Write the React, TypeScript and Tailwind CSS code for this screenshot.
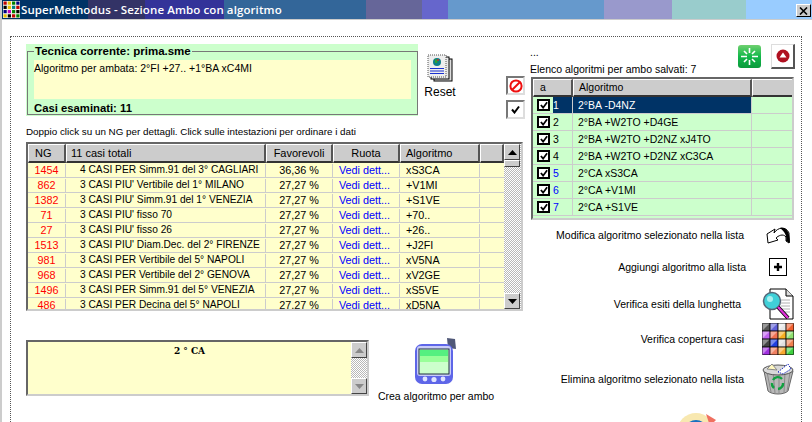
import React from "react";

const segments = [
  "w-[88px] bg-[#003366]",
  "w-[57px] bg-[#333366]",
  "w-[79px] bg-[#333399]",
  "w-[142px] bg-[#336699]",
  "w-[56px] bg-[#666699]",
  "w-[26px] bg-[#6666cc]",
  "w-[156px] bg-[#6699cc]",
  "w-[68px] bg-[#9999cc]",
  "w-[74px] bg-[#99cccc]",
  "flex-1 bg-[#99ccff]",
];

const rows = [
  ["1454", "4 CASI PER Simm.91 del 3° CAGLIARI", "36,36 %", "xS3CA"],
  ["862", "3 CASI PIU' Vertibile del 1° MILANO", "27,27 %", "+V1MI"],
  ["1382", "3 CASI PIU' Simm.91 del 1° VENEZIA", "27,27 %", "+S1VE"],
  ["71", "3 CASI PIU' fisso 70", "27,27 %", "+70.."],
  ["27", "3 CASI PIU' fisso 26", "27,27 %", "+26.."],
  ["1513", "3 CASI PIU' Diam.Dec. del 2° FIRENZE", "27,27 %", "+J2FI"],
  ["981", "3 CASI PER Vertibile del 5° NAPOLI", "27,27 %", "xV5NA"],
  ["968", "3 CASI PER Vertibile del 2° GENOVA", "27,27 %", "xV2GE"],
  ["1496", "3 CASI PER Simm.91 del 5° VENEZIA", "27,27 %", "xS5VE"],
  ["486", "3 CASI PER Decina del 5° NAPOLI", "27,27 %", "xD5NA"],
];

const algos = [
  "2°BA -D4NZ",
  "2°BA +W2TO +D4GE",
  "2°BA +W2TO +D2NZ xJ4TO",
  "2°BA +W2TO +D2NZ xC3CA",
  "2°CA xS3CA",
  "2°CA +V1MI",
  "2°CA +S1VE",
];

const headCell =
  "flex items-center bg-[#cccccc] border-t border-l border-t-white border-l-white border-r-2 border-b-2 border-r-[#555555] border-b-[#333333]";

function ArrowButton({ up, faint }: { up: boolean; faint?: boolean }) {
  return (
    <div className="flex h-[16px] w-[16px] shrink-0 items-center justify-center border border-t-white border-l-white border-r-[#444444] border-b-[#444444] bg-[#cccccc]">
      <svg width="9" height="5" viewBox="0 0 9 5">
        <path d={up ? "M4.5 0 L9 5 L0 5 Z" : "M0 0 L9 0 L4.5 5 Z"} fill={faint ? "#888888" : "#000000"} />
      </svg>
    </div>
  );
}

function Scrollbar({ faint, thumb, className }: { faint?: boolean; thumb?: boolean; className: string }) {
  return (
    <div className={`flex flex-col bg-[repeating-conic-gradient(#b8b8b8_0%_25%,#ffffff_0%_50%)] bg-size-[2px_2px] ${className}`}>
      <ArrowButton up faint={faint} />
      {thumb && <div className="h-[7px] w-[16px] border border-t-white border-l-white border-r-[#444444] border-b-[#444444] bg-[#cccccc]" />}
      <div className="flex-1" />
      <ArrowButton up={false} faint={faint} />
    </div>
  );
}

function AppIcon() {
  const c = ["#c00000", "#e8c000", "#008000", "#000080", "#000000", "#e8c000", "#008080", "#c00000", "#000080", "#c000c0", "#008000", "#000000", "#e8c000", "#000000", "#c00000", "#008000"];
  return (
    <svg width="17" height="17" viewBox="0 0 16 16" className="shrink-0">
      <rect width="16" height="16" fill="#f4f4e8" />
      {c.map((f, i) => (
        <rect key={i} x={(i % 4) * 4 + 0.5} y={Math.floor(i / 4) * 4 + 0.5} width="3" height="3" fill={f} />
      ))}
    </svg>
  );
}

function ResetIcon() {
  return (
    <svg width="26" height="28" viewBox="0 0 26 28">
      <rect x="7" y="5" width="18" height="22" fill="#dddddd" stroke="#000000" />
      <rect x="4" y="3" width="18" height="22" fill="#e8e8e8" stroke="#000000" />
      <rect x="1" y="1" width="18" height="22" fill="#eeeeee" stroke="#555555" strokeDasharray="1 1" />
      <circle cx="10" cy="8" r="4" fill="#0f7f88" />
      <path d="M8 5 L11 6 L10 9 L8 9 Z" fill="#32a032" />
      <circle cx="11" cy="6" r="1" fill="#c03030" />
      <path d="M3 14.5 H17 M3 17 H17 M3 19.5 H17" stroke="#1a30d0" strokeWidth="1" />
    </svg>
  );
}

function BevelButton({ children, className }: { children: React.ReactNode; className: string }) {
  return <div className={`flex items-center justify-center bg-white ${className}`}>{children}</div>;
}

function SyncIcon() {
  return (
    <svg width="23" height="23" viewBox="0 0 23 23">
      <defs>
        <linearGradient id="gr" x1="0" y1="0" x2="0" y2="1">
          <stop offset="0" stopColor="#6fd06f" />
          <stop offset="0.5" stopColor="#12b84a" />
          <stop offset="1" stopColor="#0a9a3c" />
        </linearGradient>
      </defs>
      <rect width="23" height="23" rx="3" fill="url(#gr)" />
      <path d="M3 11.5 H9 M14 11.5 H20 M11.5 3 V8 M11.5 15 V20 M6 6 L9 9 M17 6 L14 9 M6 17 L9 14 M17 17 L14 14" stroke="#ffffff" strokeWidth="1.6" />
    </svg>
  );
}

function UpIcon() {
  return (
    <svg width="14" height="14" viewBox="0 0 14 14">
      <circle cx="7" cy="7" r="6.5" fill="#b01020" />
      <path d="M7 3.5 L10.5 8.5 H3.5 Z" fill="#ffffff" />
    </svg>
  );
}

function StopIcon() {
  return (
    <svg width="14" height="14" viewBox="0 0 14 14">
      <circle cx="7" cy="7" r="5.6" fill="none" stroke="#ee1111" strokeWidth="2" />
      <path d="M3 11 L11 3" stroke="#ee1111" strokeWidth="2" />
    </svg>
  );
}

function CheckMark({ w = 9 }: { w?: number }) {
  return (
    <svg width={w} height={w} viewBox="0 0 9 9">
      <path d="M1 4.5 L3.5 7.5 L8 1.5" fill="none" stroke="#000000" strokeWidth="2" />
    </svg>
  );
}

function ModifyIcon() {
  return (
    <svg width="25" height="19" viewBox="0 0 25 19">
      <path d="M1 8 L9 3 L8 7 C12 1 20 0 23 7 L23 17 L20 15 L20 11 C17 7 12 10 10 12 L12 14 L2 17 Z" fill="#ffffff" stroke="#000000" strokeWidth="1" />
      <path d="M14 2 C19 1 24 4 24 17 L20 15 C21 10 19 6 14 2 Z" fill="#000000" />
    </svg>
  );
}

function PlusIcon() {
  return (
    <div className="flex h-[18px] w-[18px] items-center justify-center border border-black bg-white">
      <svg width="10" height="10" viewBox="0 0 10 10">
        <path d="M5 1 V9 M1 5 H9" stroke="#000000" strokeWidth="2.4" />
      </svg>
    </div>
  );
}

function MagnifierIcon() {
  return (
    <svg width="32" height="33" viewBox="0 0 32 33">
      <path d="M8 1 H24 L31 8 V31 H8 Z" fill="#ffffff" stroke="#000000" />
      <path d="M24 1 V8 H31" fill="#dddddd" stroke="#000000" />
      <path d="M19 12 H28 M19 15 H28 M19 18 H28 M20 21 H28 M22 24 H28" stroke="#b0b0b0" />
      <circle cx="10" cy="13" r="8.5" fill="#40d0d8" stroke="#556677" strokeWidth="1.5" />
      <circle cx="8" cy="11" r="3" fill="#a8f0f0" />
      <path d="M16 19 L26 30" stroke="#000000" strokeWidth="4" />
      <path d="M16 19 L26 30" stroke="#e030d8" strokeWidth="2.4" />
    </svg>
  );
}

function SwatchIcon() {
  const colors = ["#555555", "#6060d8", "#e8e8e8", "#f06030", "#c060f0", "#f07050", "#f8b020", "#90e070", "#444444", "#2040e0", "#e0e0e0", "#f08050", "#a030e0", "#f08060", "#f8a830", "#40d040"];
  return (
    <svg width="32" height="32" viewBox="0 0 32 32">
      <rect width="32" height="32" rx="1" fill="#000000" />
      {colors.map((f, i) => (
        <g key={i}>
          <rect x={(i % 4) * 8 + 0.5} y={Math.floor(i / 4) * 8 + 0.5} width="7" height="7" fill={f} />
          <path d={`M${(i % 4) * 8 + 0.5} ${Math.floor(i / 4) * 8 + 0.5} h7 l-7 7 z`} fill="#ffffff" opacity="0.4" />
        </g>
      ))}
    </svg>
  );
}

function RecycleIcon() {
  return (
    <svg width="32" height="33" viewBox="0 0 32 33">
      <path d="M2 8 L6 28 C10 32 22 32 26 28 L31 8 Z" fill="#b8b8b8" stroke="#666666" />
      <path d="M5 9 L9 29 M11 9 L13 30 M17 9 L17 30 M23 9 L22 30 M28 9 L25 29" stroke="#8a8a8a" strokeWidth="1" />
      <ellipse cx="16" cy="7" rx="15" ry="5" fill="#d8d8d8" stroke="#555555" />
      <path d="M5 6 L10 1 L15 7 Z" fill="#fff8c0" stroke="#888888" />
      <path d="M16 9 L26 1 L29 6 L21 11 Z" fill="#ffffff" stroke="#2030c0" strokeDasharray="1.5 1" />
      <path d="M11 17 A5.5 5.5 0 0 1 20 16 M21 20 A5.5 5.5 0 0 1 16 26 M12 25 A5.5 5.5 0 0 1 10 20" fill="none" stroke="#10a040" strokeWidth="2.4" />
    </svg>
  );
}

function PalmIcon() {
  return (
    <svg width="44" height="48" viewBox="0 0 44 48">
      <path d="M33 1 L41 2 L42 12 L34 11 Z" fill="#505878" />
      <rect x="1" y="7" width="38" height="40" rx="7" fill="#5e66e8" />
      <rect x="3" y="9" width="34" height="30" rx="3" fill="#c8ccf8" />
      <rect x="5" y="12" width="30" height="25" fill="#ccffcc" stroke="#203040" />
      <rect x="6" y="13" width="28" height="6" fill="#55f080" />
      <rect x="6" y="19" width="28" height="6" fill="#99ff99" />
      <circle cx="11" cy="42" r="2.4" fill="#e0e4ff" />
      <circle cx="20" cy="42.5" r="2.6" fill="#e0e4ff" />
      <circle cx="29" cy="42" r="2.4" fill="#e0e4ff" />
    </svg>
  );
}

function CutIcon() {
  return (
    <svg width="44" height="44" viewBox="0 0 44 44">
      <circle cx="20" cy="20" r="19" fill="#f8e8b0" />
      <circle cx="20" cy="20" r="12" fill="#1870c0" />
      <circle cx="20" cy="22" r="6" fill="#ffffff" />
      <path d="M30 2 L40 8 L34 14 Z" fill="#f07060" />
    </svg>
  );
}

const actions: [string, string, string, React.ReactNode][] = [
  ["Modifica algoritmo selezionato nella lista", "h-[28px]", "mr-[16px]", <ModifyIcon />],
  ["Aggiungi algoritmo alla lista", "h-[36px]", "mr-[14px]", <PlusIcon />],
  ["Verifica esiti della lunghetta", "h-[38px]", "mr-[19px]", <MagnifierIcon />],
  ["Verifica copertura casi", "h-[32px]", "mr-[16px]", <SwatchIcon />],
  ["Elimina algoritmo selezionato nella lista", "h-[48px]", "mr-[16px]", <RecycleIcon />],
];

export default function App() {
  return (
    <div className="relative h-[422px] w-[812px] overflow-hidden border-l-2 border-l-[#cccccc] bg-white font-['Liberation_Sans',Arial,sans-serif] text-[10.5px] leading-none text-black">
      <div className="relative -ml-[2px] flex h-[19px] w-[812px]">
        {segments.map((s) => (
          <div key={s} className={s} />
        ))}
        <div className="absolute left-[3px] top-0 flex h-[19px] items-center gap-[1px]">
          <AppIcon />
          <span className="font-['Open_Sans',sans-serif] text-[11.5px] font-semibold tracking-[0.1px] text-white">
            SuperMethodus - Sezione Ambo con algoritmo
          </span>
        </div>
        <div className="absolute right-[1px] top-[4px] flex h-[13px] w-[15px] items-center justify-center border border-t-white border-l-white border-r-black border-b-black bg-[#cccccc]">
          <svg width="9" height="8" viewBox="0 0 9 8">
            <path d="M1 0.5 L8 7.5 M8 0.5 L1 7.5" stroke="#000000" strokeWidth="1.6" />
          </svg>
        </div>
      </div>
      <div className="h-[1px] bg-[#cccccc]" />

      <div className="ml-[8px] mr-[10px] mt-[16px] flex h-[420px] border border-dotted border-[#555555] pl-[15px] pt-[7px]">
        {/* left */}
        <div className="flex w-[504px] shrink-0 flex-col">
          <div className="flex h-[76px] shrink-0 items-start">
            <div className="h-[72px] w-[392px] shrink-0 bg-[#ccffcc] px-[1px] pt-[2px]">
              <fieldset className="relative h-[69px] border border-[#777777] px-[6px]">
                <legend className="px-[1px] text-[11.5px] font-bold leading-[11px]">Tecnica corrente: prima.sme</legend>
                <div className="mt-[3px] h-[39px] w-[377px] bg-[#ffffcc] pt-[3px]">Algoritmo per ambata: 2°FI +27.. +1°BA xC4MI</div>
                <div className="mt-[3px] text-[11.3px] font-bold leading-[13px]">Casi esaminati: 11</div>
              </fieldset>
            </div>
            <div className="ml-[5px] flex w-[34px] shrink-0 flex-col items-center pt-[10px]">
              <ResetIcon />
              <span className="mt-[4px] whitespace-nowrap text-[12px] leading-[12px]">Reset</span>
            </div>
            <div className="ml-[49px] flex flex-col gap-[5px] pt-[32px]">
              <BevelButton className="h-[19px] w-[19px] border-2 border-t-[#777777] border-l-[#777777] border-r-[#dddddd] border-b-[#dddddd]">
                <StopIcon />
              </BevelButton>
              <BevelButton className="h-[19px] w-[19px] border-2 border-t-[#777777] border-l-[#777777] border-r-[#dddddd] border-b-[#dddddd]">
                <CheckMark />
              </BevelButton>
            </div>
          </div>
          <div className="flex h-[22px] shrink-0 items-center whitespace-nowrap pt-[1px] text-[9.85px]">Doppio click su un NG per dettagli. Click sulle intestazioni per ordinare i dati</div>

          <div className="flex h-[169px] w-[497px] shrink-0 overflow-hidden border-2 border-t-[#666666] border-l-[#666666] border-r-[#cccccc] border-b-[#cccccc] bg-[#ffffcc] text-[10.8px]">
            <div className="w-[476px] shrink-0 overflow-hidden">
              <div className="grid h-[19px] grid-cols-[38px_200px_67px_67px_80px_24px] text-[11px]">
                <div className={`${headCell} pl-[6px]`}>NG</div>
                <div className={`${headCell} pl-[4px]`}>11 casi totali</div>
                <div className={`${headCell} justify-center`}>Favorevoli</div>
                <div className={`${headCell} justify-center`}>Ruota</div>
                <div className={`${headCell} pl-[5px]`}>Algoritmo</div>
                <div className={headCell} />
              </div>
              {rows.map((r) => (
                <div key={r[0]} className="grid h-[15px] grid-cols-[38px_200px_67px_67px_80px_24px] items-stretch border-b border-[#cccccc] pt-[1px]">
                  <div className="flex items-center justify-center border-r border-[#cccccc] text-[#ff0000]">{r[0]}</div>
                  <div className="flex items-center whitespace-nowrap border-r border-[#cccccc] pl-[14px] text-[10.2px]">{r[1]}</div>
                  <div className="flex items-center justify-center border-r border-[#cccccc]">{r[2]}</div>
                  <div className="flex items-center border-r border-[#cccccc] pl-[6px] text-[#0000ff]">Vedi dett...</div>
                  <div className="flex items-center border-r border-[#cccccc] pl-[6px]">{r[3]}</div>
                  <div />
                </div>
              ))}
            </div>
            <Scrollbar thumb className="h-[165px] w-[17px] shrink-0" />
          </div>

          <div className="mt-[29px] flex shrink-0 items-start">
            <div className="flex h-[56px] w-[343px] shrink-0 border-2 border-t-[#666666] border-l-[#666666] border-r-[#cccccc] border-b-[#cccccc] bg-[#ffffcc]">
              <div className="flex-1 pt-[3px] text-center font-['DejaVu_Serif',serif] text-[9px] font-bold leading-[12px]">2 ° CA</div>
              <Scrollbar faint className="h-[52px] w-[16px] shrink-0" />
            </div>
            <div className="ml-[9px] -mt-[3px] flex w-[116px] shrink-0 flex-col items-center">
              <PalmIcon />
              <span className="mt-[6px] whitespace-nowrap">Crea algoritmo per ambo</span>
            </div>
          </div>
        </div>

        {/* right */}
        <div className="flex w-[266px] shrink-0 flex-col">
          <div className="flex h-[33px] shrink-0 items-start justify-between">
            <div className="flex h-[30px] flex-col justify-between pt-[3px]">
              <span>...</span>
              <span className="whitespace-nowrap">Elenco algoritmi per ambo salvati: 7</span>
            </div>
            <div className="flex items-start">
              <div className="mt-[1px] mr-[10px]">
                <SyncIcon />
              </div>
              <BevelButton className="mr-[1px] h-[25px] w-[24px] border border-t-[#dddddd] border-l-[#dddddd] border-r-2 border-b-2 border-r-[#555555] border-b-[#555555]">
                <UpIcon />
              </BevelButton>
            </div>
          </div>

          <div className="ml-[1px] h-[143px] w-[263px] shrink-0 overflow-hidden border-2 border-t-[#666666] border-l-[#666666] border-r-[#cccccc] border-b-[#cccccc] bg-[#ccffcc]">
            <div className="grid h-[18px] grid-cols-[40px_179px_42px]">
              <div className={`${headCell} pl-[6px]`}>a</div>
              <div className={`${headCell} pl-[5px]`}>Algoritmo</div>
              <div className={headCell} />
            </div>
            {algos.map((a, i) => (
              <div key={a} className="grid h-[17px] grid-cols-[40px_179px_42px] border-b border-[#cccccc]">
                <div className="flex items-center border-r border-[#cccccc] pl-[4px]">
                  <div className="flex h-[12px] w-[13px] shrink-0 items-center justify-center border-2 border-black bg-white">
                    <CheckMark w={8} />
                  </div>
                  <span className={`ml-[3px] flex h-full flex-1 items-center ${i === 0 ? "bg-[#003366] text-white" : i > 3 ? "text-[#0000ff]" : ""}`}>
                    {i + 1}
                  </span>
                </div>
                <div className={`flex items-center border-r border-[#cccccc] pl-[5px] ${i === 0 ? "bg-[#003366] text-white" : ""}`}>{a}</div>
                <div />
              </div>
            ))}
          </div>

          <div className="flex shrink-0 flex-col pt-[1px]">
            {actions.map(([label, h, mr, icon]) => (
              <div key={label} className={`flex items-center justify-end ${h}`}>
                <span className={`whitespace-nowrap ${mr}`}>{label}</span>
                <div className="flex w-[36px] shrink-0 items-center justify-center">{icon}</div>
              </div>
            ))}
            <div className="ml-[146px] mt-[9px]">
              <CutIcon />
            </div>
          </div>
        </div>
      </div>
    </div>
  );
}
